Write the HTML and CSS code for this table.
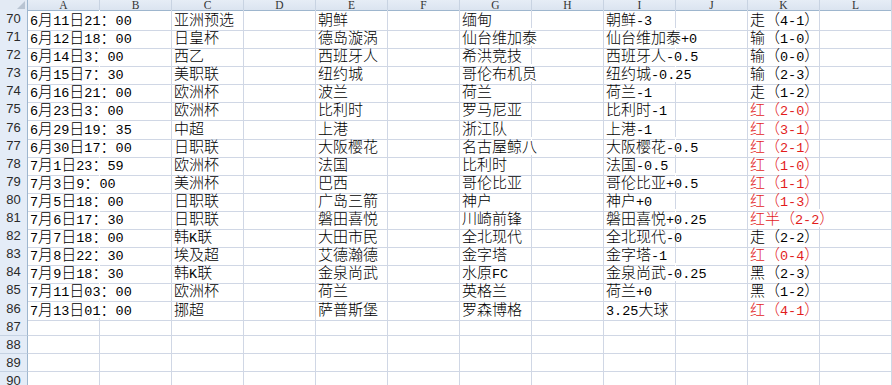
FILE: index.html
```html
<!DOCTYPE html>
<html lang="zh">
<head>
<meta charset="utf-8">
<title>Sheet</title>
<link rel="stylesheet" href="styles.css">
</head>
<body>
<div class="sheet">
  <div class="hdr">
    <div class="corner"></div>
    <div class="ch">A</div><div class="ch">B</div><div class="ch">C</div><div class="ch">D</div><div class="ch">E</div><div class="ch">F</div><div class="ch">G</div><div class="ch">H</div><div class="ch">I</div><div class="ch">J</div><div class="ch">K</div><div class="ch">L</div>
  </div>

  <div class="row"><div class="rh">70</div><div class="c ov"><span class="n">6</span>月<span class="n">11</span>日<span class="n">21</span>：<span class="n">00</span></div><div class="c"></div><div class="c">亚洲预选</div><div class="c"></div><div class="c">朝鲜</div><div class="c"></div><div class="c">缅甸</div><div class="c"></div><div class="c">朝鲜<span class="n">-3</span></div><div class="c"></div><div class="c">走（<span class="n">4-1</span>）</div><div class="c"></div></div>

  <div class="row"><div class="rh">71</div><div class="c ov"><span class="n">6</span>月<span class="n">12</span>日<span class="n">18</span>：<span class="n">00</span></div><div class="c"></div><div class="c">日皇杯</div><div class="c"></div><div class="c">德岛漩涡</div><div class="c"></div><div class="c ov">仙台维加泰</div><div class="c"></div><div class="c ov">仙台维加泰<span class="n">+0</span></div><div class="c"></div><div class="c">输（<span class="n">1-0</span>）</div><div class="c"></div></div>

  <div class="row"><div class="rh">72</div><div class="c ov"><span class="n">6</span>月<span class="n">14</span>日<span class="n">3</span>：<span class="n">00</span></div><div class="c"></div><div class="c">西乙</div><div class="c"></div><div class="c">西班牙人</div><div class="c"></div><div class="c">希洪竞技</div><div class="c"></div><div class="c ov">西班牙人<span class="n">-0.5</span></div><div class="c"></div><div class="c">输（<span class="n">0-0</span>）</div><div class="c"></div></div>

  <div class="row"><div class="rh">73</div><div class="c ov"><span class="n">6</span>月<span class="n">15</span>日<span class="n">7</span>：<span class="n">30</span></div><div class="c"></div><div class="c">美职联</div><div class="c"></div><div class="c">纽约城</div><div class="c"></div><div class="c ov">哥伦布机员</div><div class="c"></div><div class="c ov">纽约城<span class="n">-0.25</span></div><div class="c"></div><div class="c">输（<span class="n">2-3</span>）</div><div class="c"></div></div>

  <div class="row"><div class="rh">74</div><div class="c ov"><span class="n">6</span>月<span class="n">16</span>日<span class="n">21</span>：<span class="n">00</span></div><div class="c"></div><div class="c">欧洲杯</div><div class="c"></div><div class="c">波兰</div><div class="c"></div><div class="c">荷兰</div><div class="c"></div><div class="c">荷兰<span class="n">-1</span></div><div class="c"></div><div class="c">走（<span class="n">1-2</span>）</div><div class="c"></div></div>

  <div class="row"><div class="rh">75</div><div class="c ov"><span class="n">6</span>月<span class="n">23</span>日<span class="n">3</span>：<span class="n">00</span></div><div class="c"></div><div class="c">欧洲杯</div><div class="c"></div><div class="c">比利时</div><div class="c"></div><div class="c">罗马尼亚</div><div class="c"></div><div class="c">比利时<span class="n">-1</span></div><div class="c"></div><div class="c red">红（<span class="n">2-0</span>）</div><div class="c"></div></div>

  <div class="row"><div class="rh">76</div><div class="c ov"><span class="n">6</span>月<span class="n">29</span>日<span class="n">19</span>：<span class="n">35</span></div><div class="c"></div><div class="c">中超</div><div class="c"></div><div class="c">上港</div><div class="c"></div><div class="c">浙江队</div><div class="c"></div><div class="c">上港<span class="n">-1</span></div><div class="c"></div><div class="c red">红（<span class="n">3-1</span>）</div><div class="c"></div></div>

  <div class="row"><div class="rh">77</div><div class="c ov"><span class="n">6</span>月<span class="n">30</span>日<span class="n">17</span>：<span class="n">00</span></div><div class="c"></div><div class="c">日职联</div><div class="c"></div><div class="c">大阪樱花</div><div class="c"></div><div class="c ov">名古屋鲸八</div><div class="c"></div><div class="c ov">大阪樱花<span class="n">-0.5</span></div><div class="c"></div><div class="c red">红（<span class="n">2-1</span>）</div><div class="c"></div></div>

  <div class="row"><div class="rh">78</div><div class="c ov"><span class="n">7</span>月<span class="n">1</span>日<span class="n">23</span>：<span class="n">59</span></div><div class="c"></div><div class="c">欧洲杯</div><div class="c"></div><div class="c">法国</div><div class="c"></div><div class="c">比利时</div><div class="c"></div><div class="c">法国<span class="n">-0.5</span></div><div class="c"></div><div class="c red">红（<span class="n">1-0</span>）</div><div class="c"></div></div>

  <div class="row"><div class="rh">79</div><div class="c ov"><span class="n">7</span>月<span class="n">3</span>日<span class="n">9</span>：<span class="n">00</span></div><div class="c"></div><div class="c">美洲杯</div><div class="c"></div><div class="c">巴西</div><div class="c"></div><div class="c">哥伦比亚</div><div class="c"></div><div class="c ov">哥伦比亚<span class="n">+0.5</span></div><div class="c"></div><div class="c red">红（<span class="n">1-1</span>）</div><div class="c"></div></div>

  <div class="row"><div class="rh">80</div><div class="c ov"><span class="n">7</span>月<span class="n">5</span>日<span class="n">18</span>：<span class="n">00</span></div><div class="c"></div><div class="c">日职联</div><div class="c"></div><div class="c">广岛三箭</div><div class="c"></div><div class="c">神户</div><div class="c"></div><div class="c">神户<span class="n">+0</span></div><div class="c"></div><div class="c red">红（<span class="n">1-3</span>）</div><div class="c"></div></div>

  <div class="row"><div class="rh">81</div><div class="c ov"><span class="n">7</span>月<span class="n">6</span>日<span class="n">17</span>：<span class="n">30</span></div><div class="c"></div><div class="c">日职联</div><div class="c"></div><div class="c">磐田喜悦</div><div class="c"></div><div class="c">川崎前锋</div><div class="c"></div><div class="c ov">磐田喜悦<span class="n">+0.25</span></div><div class="c"></div><div class="c red ov">红半（<span class="n">2-2</span>）</div><div class="c"></div></div>

  <div class="row"><div class="rh">82</div><div class="c ov"><span class="n">7</span>月<span class="n">7</span>日<span class="n">18</span>：<span class="n">00</span></div><div class="c"></div><div class="c">韩<span class="n">K</span>联</div><div class="c"></div><div class="c">大田市民</div><div class="c"></div><div class="c">全北现代</div><div class="c"></div><div class="c">全北现代<span class="n">-0</span></div><div class="c"></div><div class="c">走（<span class="n">2-2</span>）</div><div class="c"></div></div>

  <div class="row"><div class="rh">83</div><div class="c ov"><span class="n">7</span>月<span class="n">8</span>日<span class="n">22</span>：<span class="n">30</span></div><div class="c"></div><div class="c">埃及超</div><div class="c"></div><div class="c">艾德瀚德</div><div class="c"></div><div class="c">金字塔</div><div class="c"></div><div class="c">金字塔<span class="n">-1</span></div><div class="c"></div><div class="c red">红（<span class="n">0-4</span>）</div><div class="c"></div></div>

  <div class="row"><div class="rh">84</div><div class="c ov"><span class="n">7</span>月<span class="n">9</span>日<span class="n">18</span>：<span class="n">30</span></div><div class="c"></div><div class="c">韩<span class="n">K</span>联</div><div class="c"></div><div class="c">金泉尚武</div><div class="c"></div><div class="c">水原<span class="n">FC</span></div><div class="c"></div><div class="c ov">金泉尚武<span class="n">-0.25</span></div><div class="c"></div><div class="c">黑（<span class="n">2-3</span>）</div><div class="c"></div></div>

  <div class="row"><div class="rh">85</div><div class="c ov"><span class="n">7</span>月<span class="n">11</span>日<span class="n">03</span>：<span class="n">00</span></div><div class="c"></div><div class="c">欧洲杯</div><div class="c"></div><div class="c">荷兰</div><div class="c"></div><div class="c">英格兰</div><div class="c"></div><div class="c">荷兰<span class="n">+0</span></div><div class="c"></div><div class="c">黑（<span class="n">1-2</span>）</div><div class="c"></div></div>

  <div class="row"><div class="rh">86</div><div class="c ov"><span class="n">7</span>月<span class="n">13</span>日<span class="n">01</span>：<span class="n">00</span></div><div class="c"></div><div class="c">挪超</div><div class="c"></div><div class="c">萨普斯堡</div><div class="c"></div><div class="c">罗森博格</div><div class="c"></div><div class="c"><span class="n">3.25</span>大球</div><div class="c"></div><div class="c red">红（<span class="n">4-1</span>）</div><div class="c"></div></div>

  <div class="row"><div class="rh">87</div><div class="c"></div><div class="c"></div><div class="c"></div><div class="c"></div><div class="c"></div><div class="c"></div><div class="c"></div><div class="c"></div><div class="c"></div><div class="c"></div><div class="c"></div><div class="c"></div></div>
  <div class="row"><div class="rh">88</div><div class="c"></div><div class="c"></div><div class="c"></div><div class="c"></div><div class="c"></div><div class="c"></div><div class="c"></div><div class="c"></div><div class="c"></div><div class="c"></div><div class="c"></div><div class="c"></div></div>
  <div class="row"><div class="rh">89</div><div class="c"></div><div class="c"></div><div class="c"></div><div class="c"></div><div class="c"></div><div class="c"></div><div class="c"></div><div class="c"></div><div class="c"></div><div class="c"></div><div class="c"></div><div class="c"></div></div>
  <div class="row"><div class="rh">90</div><div class="c"></div><div class="c"></div><div class="c"></div><div class="c"></div><div class="c"></div><div class="c"></div><div class="c"></div><div class="c"></div><div class="c"></div><div class="c"></div><div class="c"></div><div class="c"></div></div>
</div>
</body>
</html>
```
FILE: styles.css
```css
* { box-sizing: border-box; }
html, body { margin: 0; padding: 0; background: #fff; }

.sheet {
  width: 892px;
  height: 385px;
  overflow: hidden;
  font-family: "Noto Sans CJK SC", sans-serif;
  font-size: 15px;
  font-weight: 300;
  color: #000;
}

.hdr, .row {
  display: grid;
  grid-template-columns: 28px repeat(12, 72px);
}
.hdr { height: 10px; }
.row { height: 18.1px; }

.corner {
  background: #e3eaf4;
  border-right: 1px solid #9eb6ce;
  border-bottom: 1px solid #9eb6ce;
  display: flex;
  justify-content: flex-end;
  align-items: flex-end;
  padding: 0 2px 1px 0;
}
.corner::after {
  content: "";
  width: 8px;
  height: 8px;
  background: #b9c4d2;
  clip-path: polygon(100% 0, 100% 100%, 0 100%);
}

.ch {
  background: linear-gradient(#e6edf6, #dbe4f0);
  border-right: 1px solid #c8d3e2;
  border-bottom: 1px solid #9eb6ce;
  font-family: "Liberation Serif", serif;
  font-size: 11.5px;
  font-weight: 400;
  line-height: 9px;
  padding-top: 1px;
  color: #333;
  text-align: center;
}

.rh {
  background: #e4ecf7;
  border-right: 1px solid #9eb6ce;
  border-bottom: 1px solid #c5d2e3;
  font-family: "Liberation Sans", sans-serif;
  font-size: 13px;
  font-weight: 400;
  line-height: 17px;
  color: #2a2a2a;
  text-align: center;
}

.c {
  border-right: 1px solid #d0d7e5;
  border-bottom: 1px solid #d0d7e5;
  padding-left: 2px;
  white-space: nowrap;
  line-height: 17px;
}
.c.ov { border-right-color: #fff; }

.red { color: #e21c1c; }

.n {
  font-family: "Liberation Mono", monospace;
  font-size: 13.5px;
  font-weight: 400;
}
```
